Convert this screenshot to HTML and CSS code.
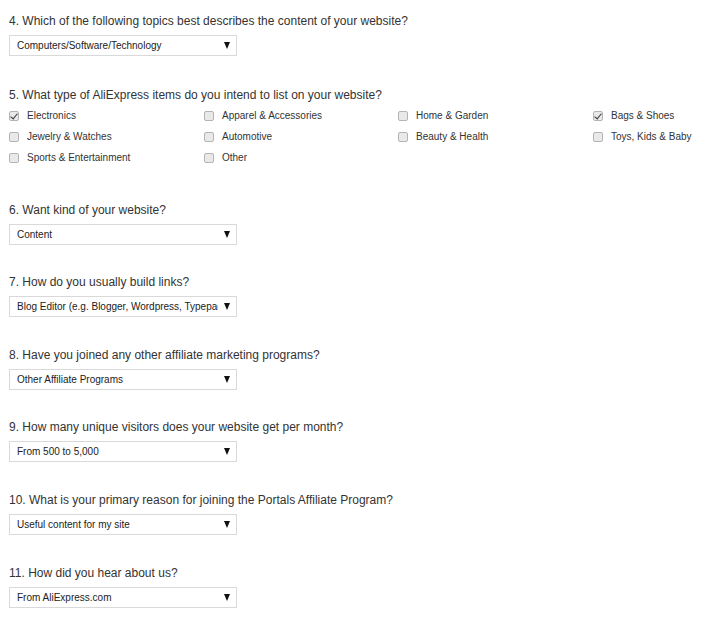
FILE: index.html
```html
<!DOCTYPE html>
<html lang="en">
<head>
    <meta charset="UTF-8">
    <meta name="viewport" content="width=device-width, initial-scale=1.0">
    <title>Affiliate Survey</title>
    <link rel="stylesheet" href="styles.css">
</head>
<body>

    <div class="survey">

        <!-- 4 -->
        <div class="question">
            <h3>4. Which of the following topics best describes the content of your website?</h3>
            <div class="select"><span class="value">Computers/Software/Technology</span><span class="arrow"></span></div>
        </div>

        <!-- 5 -->
        <div class="question">
            <h3>5. What type of AliExpress items do you intend to list on your website?</h3>
            <div class="checks">
                <label class="check"><span class="box checked"></span>Electronics</label>
                <label class="check"><span class="box"></span>Apparel &amp; Accessories</label>
                <label class="check"><span class="box"></span>Home &amp; Garden</label>
                <label class="check"><span class="box checked"></span>Bags &amp; Shoes</label>
                <label class="check"><span class="box"></span>Jewelry &amp; Watches</label>
                <label class="check"><span class="box"></span>Automotive</label>
                <label class="check"><span class="box"></span>Beauty &amp; Health</label>
                <label class="check"><span class="box"></span>Toys, Kids &amp; Baby</label>
                <label class="check"><span class="box"></span>Sports &amp; Entertainment</label>
                <label class="check"><span class="box"></span>Other</label>
            </div>
        </div>

        <!-- 6 -->
        <div class="question">
            <h3>6. Want kind of your website?</h3>
            <div class="select"><span class="value">Content</span><span class="arrow"></span></div>
        </div>

        <!-- 7 -->
        <div class="question">
            <h3>7. How do you usually build links?</h3>
            <div class="select"><span class="value">Blog Editor (e.g. Blogger, Wordpress, Typepad)</span><span class="arrow"></span></div>
        </div>

        <!-- 8 -->
        <div class="question">
            <h3>8. Have you joined any other affiliate marketing programs?</h3>
            <div class="select"><span class="value">Other Affiliate Programs</span><span class="arrow"></span></div>
        </div>

        <!-- 9 -->
        <div class="question">
            <h3>9. How many unique visitors does your website get per month?</h3>
            <div class="select"><span class="value">From 500 to 5,000</span><span class="arrow"></span></div>
        </div>

        <!-- 10 -->
        <div class="question">
            <h3>10. What is your primary reason for joining the Portals Affiliate Program?</h3>
            <div class="select"><span class="value">Useful content for my site</span><span class="arrow"></span></div>
        </div>

        <!-- 11 -->
        <div class="question">
            <h3>11. How did you hear about us?</h3>
            <div class="select"><span class="value">From AliExpress.com</span><span class="arrow"></span></div>
        </div>

    </div>

</body>
</html>
```

FILE: styles.css
```css
* {
    margin: 0;
    padding: 0;
    box-sizing: border-box;
}

body {
    font-family: "Liberation Sans", Arial, sans-serif;
    color: #333;
    background: #fff;
}

.survey {
    padding: 11px 9px 10px;
}

.question {
    margin-bottom: 27.6px;
}

.question:first-child {
    margin-bottom: 29px;
}

.question h3 {
    font-size: 12px;
    font-weight: normal;
    line-height: 20px;
    color: #333;
}

.select {
    display: flex;
    align-items: center;
    width: 228px;
    height: 21px;
    margin-top: 4px;
    padding: 0 6px 0 7px;
    border: 1px solid #d9d9d9;
    background: #fff;
    font-size: 10px;
    color: #222;
}

.select .value {
    flex: 1;
    overflow: hidden;
    white-space: nowrap;
    margin-right: 6px;
}

.select .arrow {
    width: 0;
    height: 0;
    border-left: 3.5px solid transparent;
    border-right: 3.5px solid transparent;
    border-top: 7px solid #111;
}

.checks {
    display: grid;
    grid-template-columns: 195px 194px 195px 1fr;
    grid-auto-rows: 21px;
    padding-bottom: 4px;
}

.check {
    display: flex;
    align-items: center;
    font-size: 10px;
    color: #333;
}

.box {
    width: 10px;
    height: 10px;
    margin-right: 8px;
    border: 1px solid #b4b4b4;
    border-radius: 2px;
    background: #e9e9e9;
    position: relative;
}

.box.checked::after {
    content: "";
    position: absolute;
    left: 2px;
    top: 0px;
    width: 3px;
    height: 6px;
    border-right: 1.5px solid #333;
    border-bottom: 1.5px solid #333;
    transform: rotate(40deg);
}
```
